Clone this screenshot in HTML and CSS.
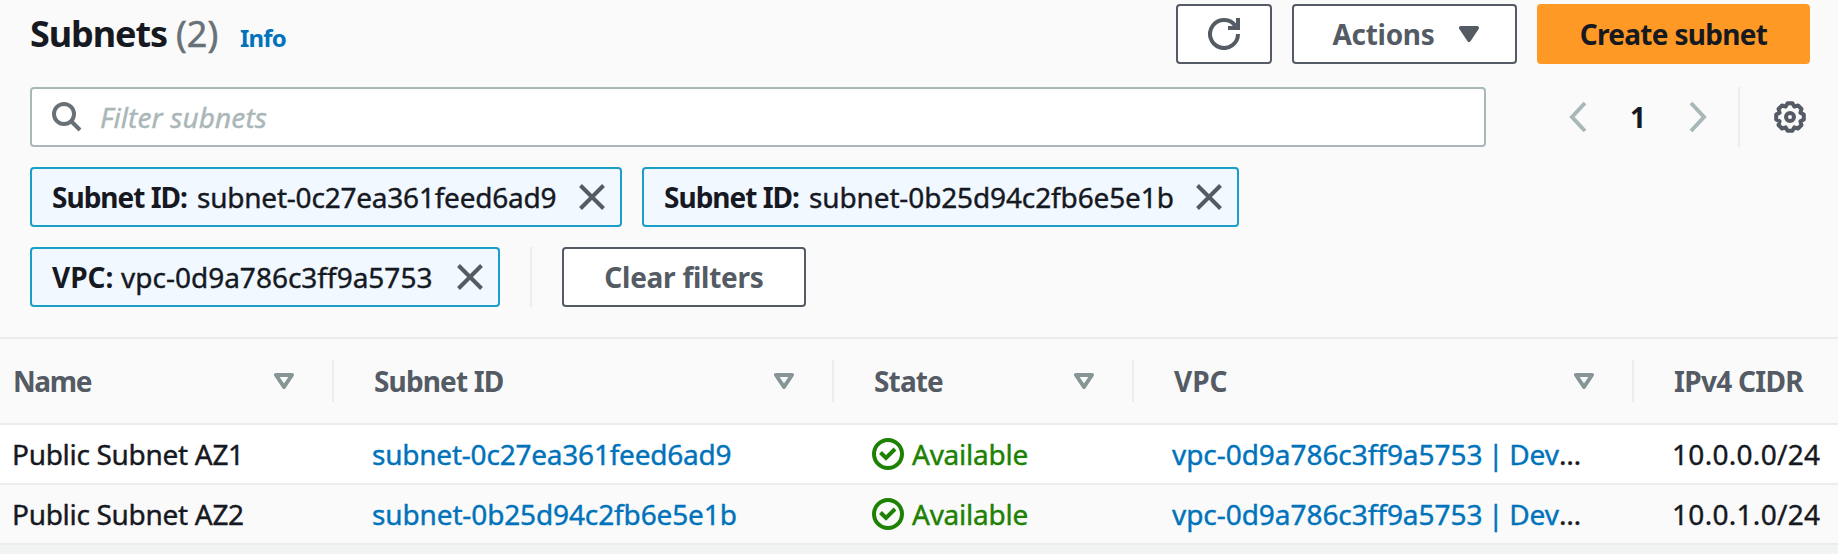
FILE: index.html
```html
<!DOCTYPE html>
<html lang="en">
<head>
<meta charset="utf-8">
<title>Subnets</title>
<link rel="stylesheet" href="styles.css">
</head>
<body>
<svg class="defs" aria-hidden="true">
  <symbol id="sort" viewBox="0 0 20 16"><path d="M2 2H18L10 14Z" fill="none" stroke="#879596" stroke-width="4" stroke-linejoin="round"/></symbol>
  <symbol id="close" viewBox="0 0 26 26"><path d="M1.5 1.5L24.5 24.5M24.5 1.5L1.5 24.5" fill="none" stroke="#545b64" stroke-width="4"/></symbol>
  <symbol id="check" viewBox="0 0 32 32"><g fill="none" stroke="#1d8102" stroke-width="4"><circle cx="16" cy="16" r="14"/><path d="M8.5 14.5L14 20L23 11"/></g></symbol>
</svg>
<header class="header">
  <h1 class="title"><span class="title-text">Subnets</span> <span class="count">(2)</span></h1>
  <a class="info">Info</a>
  <div class="actions">
    <button class="btn btn-refresh" aria-label="Refresh"><svg width="32" height="32" viewBox="0 0 32 32" fill="none" stroke="#545b64" stroke-width="4"><path d="M30 16A14 14 0 1 1 27.5 8"/><path d="M30 0V10H20"/></svg></button>
    <button class="btn btn-actions"><span>Actions</span><svg width="20" height="16" viewBox="0 0 20 16"><path d="M2 2H18L10 14Z" fill="#545b64" stroke="#545b64" stroke-width="4" stroke-linejoin="round"/></svg></button>
    <button class="btn btn-primary"><span>Create subnet</span></button>
  </div>
</header>
<div class="toolbar">
  <div class="search">
    <svg width="30" height="30" viewBox="0 0 30 30" fill="none" stroke="#687078" stroke-width="4"><circle cx="12" cy="12" r="10"/><path d="M19 19L28 28"/></svg>
    <span class="placeholder">Filter subnets</span>
  </div>
  <nav class="pager">
    <svg width="18" height="32" viewBox="0 0 18 32" fill="none" stroke="#aab7b8" stroke-width="4"><path d="M16 2L3 16L16 30"/></svg>
    <span class="page">1</span>
    <svg width="18" height="32" viewBox="0 0 18 32" fill="none" stroke="#aab7b8" stroke-width="4"><path d="M2 2L15 16L2 30"/></svg>
  </nav>
  <div class="settings">
    <svg width="32" height="32" viewBox="-16 -16 32 32" fill="none" stroke="#545b64" stroke-width="4" stroke-linejoin="round"><circle r="4"/><path d="M13.8-2.4L13.8 2.4L10.4 4.3L11.5 8L8 11.5L4.3 10.4L2.4 13.8L-2.4 13.8L-4.3 10.4L-8 11.5L-11.5 8L-10.4 4.3L-13.8 2.4L-13.8-2.4L-10.4-4.3L-11.5-8L-8-11.5L-4.3-10.4L-2.4-13.8L2.4-13.8L4.3-10.4L8-11.5L11.5-8L10.4-4.3Z"/></svg>
  </div>
</div>
<div class="filters">
  <div class="token token-a"><b>Subnet ID:</b><span class="id-a">subnet-0c27ea361feed6ad9</span><svg width="26" height="26"><use href="#close"/></svg></div>
  <div class="token token-b"><b>Subnet ID:</b><span class="id-b">subnet-0b25d94c2fb6e5e1b</span><svg width="26" height="26"><use href="#close"/></svg></div>
</div>
<div class="filters filters-last">
  <div class="token token-c"><b class="key-vpc">VPC:</b><span>vpc-0d9a786c3ff9a5753</span><svg width="26" height="26"><use href="#close"/></svg></div>
  <div class="clear"><button class="btn btn-clear"><span>Clear filters</span></button></div>
</div>
<div class="table">
  <div class="row head">
    <div class="th"><span class="th-name">Name</span><svg width="20" height="16"><use href="#sort"/></svg></div>
    <div class="th"><span>Subnet ID</span><svg width="20" height="16"><use href="#sort"/></svg></div>
    <div class="th"><span>State</span><svg width="20" height="16"><use href="#sort"/></svg></div>
    <div class="th"><span class="th-vpc">VPC</span><svg width="20" height="16"><use href="#sort"/></svg></div>
    <div class="th th-end"><span>IPv4 CIDR</span></div>
  </div>
  <div class="row">
    <div class="td name">Public Subnet AZ1</div>
    <div class="td"><a class="id-a">subnet-0c27ea361feed6ad9</a></div>
    <div class="td state"><svg width="32" height="32"><use href="#check"/></svg><span>Available</span></div>
    <div class="td"><a class="vpc">vpc-0d9a786c3ff9a5753 | Dev</a><span>…</span></div>
    <div class="td cidr">10.0.0.0/24</div>
  </div>
  <div class="row alt">
    <div class="td name">Public Subnet AZ2</div>
    <div class="td"><a class="id-b">subnet-0b25d94c2fb6e5e1b</a></div>
    <div class="td state"><svg width="32" height="32"><use href="#check"/></svg><span>Available</span></div>
    <div class="td"><a class="vpc">vpc-0d9a786c3ff9a5753 | Dev</a><span>…</span></div>
    <div class="td cidr">10.0.1.0/24</div>
  </div>
</div>
</body>
</html>
```
FILE: styles.css
```css
* { box-sizing: border-box; }
body {
  margin: 0;
  height: 554px;
  overflow: hidden;
  background: #f2f3f3;
  color: #16191f;
  font: 28px/36px "Noto Sans", "Open Sans", sans-serif;
  white-space: nowrap;
}
svg { display: block; flex: none; }
.defs { display: none; }

.header, .toolbar, .filters { display: flex; background: #fafafa; }

.header { height: 87px; padding: 4px 28px 0 30px; align-items: flex-start; }
.title { margin: 0; font-size: 36px; line-height: 59px; font-weight: 700; display: flex; }
.title-text { letter-spacing: -1.1px; width: 146px; }
.count { font-weight: 400; color: #687078; width: 41px; -webkit-text-stroke: .5px; }
.info { margin-left: 23px; font-size: 24px; line-height: 67px; font-weight: 700; letter-spacing: -.8px; color: #0073bb; }
.actions { display: flex; gap: 20px; margin-left: auto; }

.btn {
  display: flex;
  align-items: center;
  justify-content: center;
  height: 60px;
  padding: 0;
  background: #fff;
  border: 2px solid #545b64;
  border-radius: 4px;
  color: #545b64;
  font: inherit;
  font-weight: 700;
  letter-spacing: -.3px;
}
.btn span { padding-bottom: 1px; }
.btn-refresh { width: 96px; }
.btn-actions { width: 225px; gap: 24px; padding-left: 2px; }
.btn-primary { width: 273px; background: #ff9926; border-color: #ff9926; color: #16191f; letter-spacing: -.7px; }
.btn-clear { width: 244px; letter-spacing: -.25px; }

.toolbar { height: 80px; padding: 0 32px 20px 30px; }
.search {
  display: flex;
  align-items: center;
  width: 1456px;
  padding-left: 20px;
  gap: 18px;
  background: #fff;
  border: 2px solid #aab7b8;
  border-radius: 4px;
}
.placeholder { font-style: italic; color: #aab7b8; letter-spacing: .1px; -webkit-text-stroke: .4px; }
.pager { display: flex; align-items: center; margin-left: 83px; width: 169px; }
.page { width: 102px; text-align: center; font-weight: 700; }
.settings { display: flex; align-items: center; border-left: 2px solid #eaeded; padding-left: 34px; }

.filters { height: 80px; padding: 0 30px 20px; gap: 20px; }
.filters-last { height: 90px; padding-bottom: 30px; gap: 30px; }
.token {
  display: flex;
  align-items: center;
  background: #f1f8ff;
  border: 2px solid #1a9fc8;
  border-radius: 4px;
  padding: 0 15px 0 20px;
}
.token b, .token span { padding-bottom: 1px; }
.token span, .td { -webkit-text-stroke: .4px; }
.token b { width: 145px; letter-spacing: -1px; }
.token svg { margin-left: auto; }
.token-a { width: 592px; }
.token-b { width: 597px; }
.token-c { width: 470px; }
.token .key-vpc { width: 69px; letter-spacing: 0; }
.id-a { letter-spacing: -.22px; }
.id-b { letter-spacing: -.13px; }
.clear { display: flex; border-left: 2px solid #eaeded; padding-left: 30px; }

.table { border-top: 2px solid #eaeded; }
.row {
  display: grid;
  grid-template-columns: 334px 500px 300px 500px 204px;
  height: 60px;
  background: #fff;
  border-bottom: 2px solid #eaeded;
}
.row.alt { background: #fafafa; }
.head { height: 86px; background: #fafafa; align-items: center; }
.th {
  display: flex;
  align-items: center;
  justify-content: space-between;
  height: 42px;
  padding: 0 38px 0 40px;
  border-right: 2px solid #eaeded;
  color: #545b64;
  font-weight: 700;
  letter-spacing: -.85px;
}
.th:first-child { padding-left: 13px; }
.th-end { border: 0; letter-spacing: -.7px; }
.th span { padding-bottom: 1px; }
.th-name { letter-spacing: -1.4px; }
.th-vpc { letter-spacing: 0; }
.td { display: flex; align-items: center; padding-left: 38px; }
.name { padding-left: 12px; letter-spacing: -.3px; }
.td a { color: #0073bb; }
.vpc { letter-spacing: -.05px; word-spacing: -1.5px; }
.state { gap: 8px; letter-spacing: -.25px; color: #1d8102; }
.cidr { padding-left: 38px; letter-spacing: .3px; }
```
